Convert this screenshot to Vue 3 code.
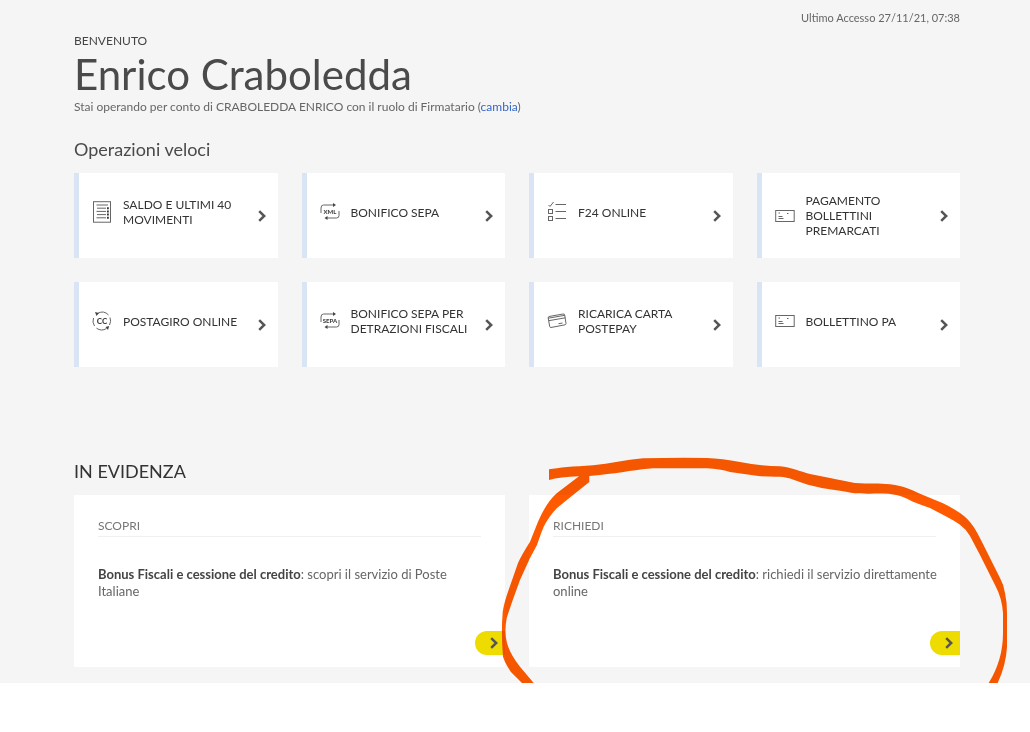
<script setup>
const operations = [
  { label: 'SALDO E ULTIMI 40 MOVIMENTI', icon: 'list' },
  { label: 'BONIFICO SEPA', icon: 'transfer', tag: 'XML' },
  { label: 'F24 ONLINE', icon: 'check' },
  { label: 'PAGAMENTO BOLLETTINI PREMARCATI', icon: 'slip' },
  { label: 'POSTAGIRO ONLINE', icon: 'cycle' },
  { label: 'BONIFICO SEPA PER DETRAZIONI FISCALI', icon: 'transfer', tag: 'SEPA' },
  { label: 'RICARICA CARTA POSTEPAY', icon: 'card' },
  { label: 'BOLLETTINO PA', icon: 'slip' },
]
const highlights = [
  { kicker: 'SCOPRI', text: ': scopri il servizio di Poste Italiane' },
  { kicker: 'RICHIEDI', text: ': richiedi il servizio direttamente online' },
]
</script>

<template>
  <main class="page">
    <p class="access">Ultimo Accesso 27/11/21, 07:38</p>
    <header>
      <p class="welcome">BENVENUTO</p>
      <h1>Enrico Craboledda</h1>
      <p class="role">
        Stai operando per conto di CRABOLEDDA ENRICO con il ruolo di Firmatario (<a href="#">cambia</a>)
      </p>
    </header>

    <section>
      <h2 class="quick-title">Operazioni veloci</h2>
      <nav class="tiles">
        <a v-for="op in operations" :key="op.label" href="#" class="tile">
          <span class="tile-body">
            <svg class="icon" viewBox="0 0 20 22" aria-hidden="true">
              <g v-if="op.icon === 'list'">
                <rect x="1.5" y="0.700" width="17" height="20.500" />
                <path d="M4.500 4H16M5 7.200H14M4.500 10.400H14M5 13.600H14M4.500 16.800H14" />
                <path class="dots" d="M15 7.200h1.800M15 10.400h1.800M15 13.600h1.800M15 16.800h1.800" />
              </g>
              <g v-else-if="op.icon === 'transfer'">
                <path d="M1 12V7Q1 4 3.500 4H14M19 10v4.500q0 2.500-2.500 2.500H6" />
                <path class="solid" d="M13 2L16 4L13 6ZM7.500 15L4.500 17L7.500 19Z" />
                <text x="10" y="13">{{ op.tag }}</text>
              </g>
              <g v-else-if="op.icon === 'check'">
                <path d="M1.500 4L3 5.500L6.500 1M8.500 3.500H19M8.500 10.500H19M8.500 17.500H19" />
                <rect x="1.500" y="8.500" width="4" height="4" />
                <rect x="1.500" y="15.500" width="4" height="4" />
              </g>
              <g v-else-if="op.icon === 'slip'">
                <rect x="0.700" y="5.500" width="18.500" height="11" />
                <path d="M3.500 8h1.500M3.500 11.500h4M3.500 13.500h5M12 8.500h1.500" />
              </g>
              <g v-else-if="op.icon === 'cycle'">
                <path d="M2.500 16A9 9 0 0 1 1.500 8M6 3.200A8.800 8.800 0 0 1 16.500 5M18 7.500A9 9 0 0 1 17.500 15M14.500 18.500A9 9 0 0 1 4.500 18.200" />
                <path class="solid" d="M3 2L7 3L4.500 6ZM13.500 17L17.200 16L16 20Z" />
                <text x="10" y="13.500" class="cc">CC</text>
              </g>
              <g v-else>
                <path d="M2 6.500L16 4Q17.500 3.800 17.700 5L19 13.500Q19 14.500 18 14.800L4 17.500Q3 17.600 2.700 16.500L1.200 8Q1 6.800 2 6.500ZM1.300 8.200L17.800 5.300M1.800 10.700L18.300 7.800M11.500 13.700L15.500 13" />
              </g>
            </svg>
            <span>{{ op.label }}</span>
          </span>
          <svg class="chevron" viewBox="0 0 8 12" aria-hidden="true"><path d="M1.200 1.200L6.200 6L1.200 10.800" /></svg>
        </a>
      </nav>
    </section>

    <section>
      <h2 class="featured-title">IN EVIDENZA</h2>
      <div class="features">
        <article v-for="item in highlights" :key="item.kicker" class="feature">
          <h3>{{ item.kicker }}</h3>
          <p><strong>Bonus Fiscali e cessione del credito</strong>{{ item.text }}</p>
          <button type="button" :aria-label="item.kicker">
            <svg class="chevron" viewBox="0 0 8 12" aria-hidden="true"><path d="M1.200 1.200L6.200 6L1.200 10.800" /></svg>
          </button>
        </article>
      </div>
    </section>

    <svg class="marker" viewBox="490 443 540 240" aria-hidden="true">
      <path d="M549 469.300Q563 467 593 465.300C610 463.500 625 460 643 458.300Q675 457.600 707 458Q722 458.700 740 462Q760 466 780 466.300C791 467.500 800 471.500 810 474L830 478Q845 481 855 483C870 484 879 483 890 484.300C905 486 911 490 920 493.700L943 503.300Q951 507 960 513Q968 518.500 973 526Q976 530 983 544L1000 578Q1004 585 1005 593Q1007 602 1007 613V647Q1006 665 997.700 683H988.700Q1003 660 1003 633V613Q1002 598 995 585L980 555L970 536Q966 529 960 524.700Q955 521 946.700 516.700L930 508Q920 504.500 913 501.700C905 497.500 899 494 883 493.500C872 493.500 866 494 855 493.300Q848 492 833 489.700Q820 488 808 484.700C798 481.500 789 477 780 476.700Q765 477 753 475.300L730 472Q720 469 707 468.300H653C640 469 620 473 600 475L589.300 476V482L573 495L557 508Q550 515 544 526Q541 533 537 545L530 558L520 580L511.700 603L506.700 618Q504 632 507 643Q510 654 520 666.700L533.700 683H522L510.700 671.700Q505 663 503 656.700Q501 633 502.700 611.700Q504 603 508 591.700L518 563Q521 556 530 541.700L538 521.700Q546 503 556.700 493.300L579 476.300Q560 477 549 480Z" />
    </svg>
  </main>
</template>

<style>
body {
  margin: 0;
  background: #fff;
}
</style>

<style scoped>
.page {
  position: relative;
  overflow: hidden;
  padding: 10px 70px 16px 74px;
  background: #f5f5f5;
  color: #555;
  font-family: Lato, "Liberation Sans", sans-serif;
}
p, h1, h2, h3 {
  margin: 0;
  font-weight: 400;
}
.access {
  text-align: right;
  font-size: 11px;
  line-height: 16px;
  color: #666;
}
.welcome {
  margin-top: 7px;
  font-size: 12px;
  line-height: 16px;
  color: #444;
}
h1 {
  font-size: 42px;
  line-height: 50px;
  color: #4a4a4a;
}
.role {
  font-size: 12px;
  line-height: 16px;
  color: #666;
}
a {
  color: #3566c8;
  text-decoration: none;
}
.quick-title {
  margin-top: 22px;
  font-size: 18px;
  line-height: 24px;
  color: #4a4a4a;
}
.tiles {
  display: grid;
  grid-template-columns: repeat(4, 1fr);
  gap: 24px;
  margin-top: 12px;
}
.tile {
  display: flex;
  align-items: center;
  justify-content: space-between;
  box-sizing: border-box;
  min-height: 85px;
  padding-right: 12px;
  border-left: 5px solid #d9e4f5;
  background: #fff;
  color: #333;
  font-size: 12px;
  line-height: 15px;
}
.tile-body {
  display: flex;
  align-items: center;
  gap: 11px;
  align-self: flex-start;
  min-height: 38px;
  margin-top: 20px;
  padding-left: 13px;
  max-width: 158px;
}
.icon {
  flex: none;
  width: 20px;
  height: 22px;
  fill: none;
  stroke: #666;
  stroke-width: 1;
}
.dots {
  stroke: #333;
  stroke-width: 2;
}
.solid {
  fill: #444;
  stroke: none;
}
.icon text {
  fill: #444;
  stroke: none;
  font-size: 6px;
  font-weight: 900;
  text-anchor: middle;
}
.icon .cc {
  font-size: 8px;
}
.chevron {
  flex: none;
  width: 8px;
  height: 12px;
  fill: none;
  stroke: #555;
  stroke-width: 2.5;
}
.featured-title {
  margin-top: 92px;
  font-size: 18px;
  line-height: 24px;
  color: #333;
}
.features {
  display: grid;
  grid-template-columns: 1fr 1fr;
  gap: 24px;
  margin-top: 12px;
}
.feature {
  display: flex;
  flex-direction: column;
  box-sizing: border-box;
  min-height: 172px;
  padding: 23px 0 12px 24px;
  background: #fff;
}
h3 {
  margin-right: 24px;
  padding-bottom: 2px;
  border-bottom: 1px solid #f0f0f0;
  font-size: 12px;
  line-height: 16px;
  color: #777;
}
.feature p {
  margin: 29px 16px 0 0;
  font-size: 13px;
  line-height: 17px;
  color: #666;
}
strong {
  font-weight: 700;
  color: #444;
}
button {
  display: flex;
  align-items: center;
  align-self: flex-end;
  width: 30px;
  height: 24px;
  margin-top: auto;
  padding: 0 0 0 15px;
  border: 0;
  border-radius: 12px 0 0 12px;
  background: #eedc00;
}
.marker {
  position: absolute;
  right: 0;
  bottom: 0;
  width: 540px;
  height: 240px;
  fill: #ff5a00;
  mix-blend-mode: multiply;
  pointer-events: none;
}
</style>
